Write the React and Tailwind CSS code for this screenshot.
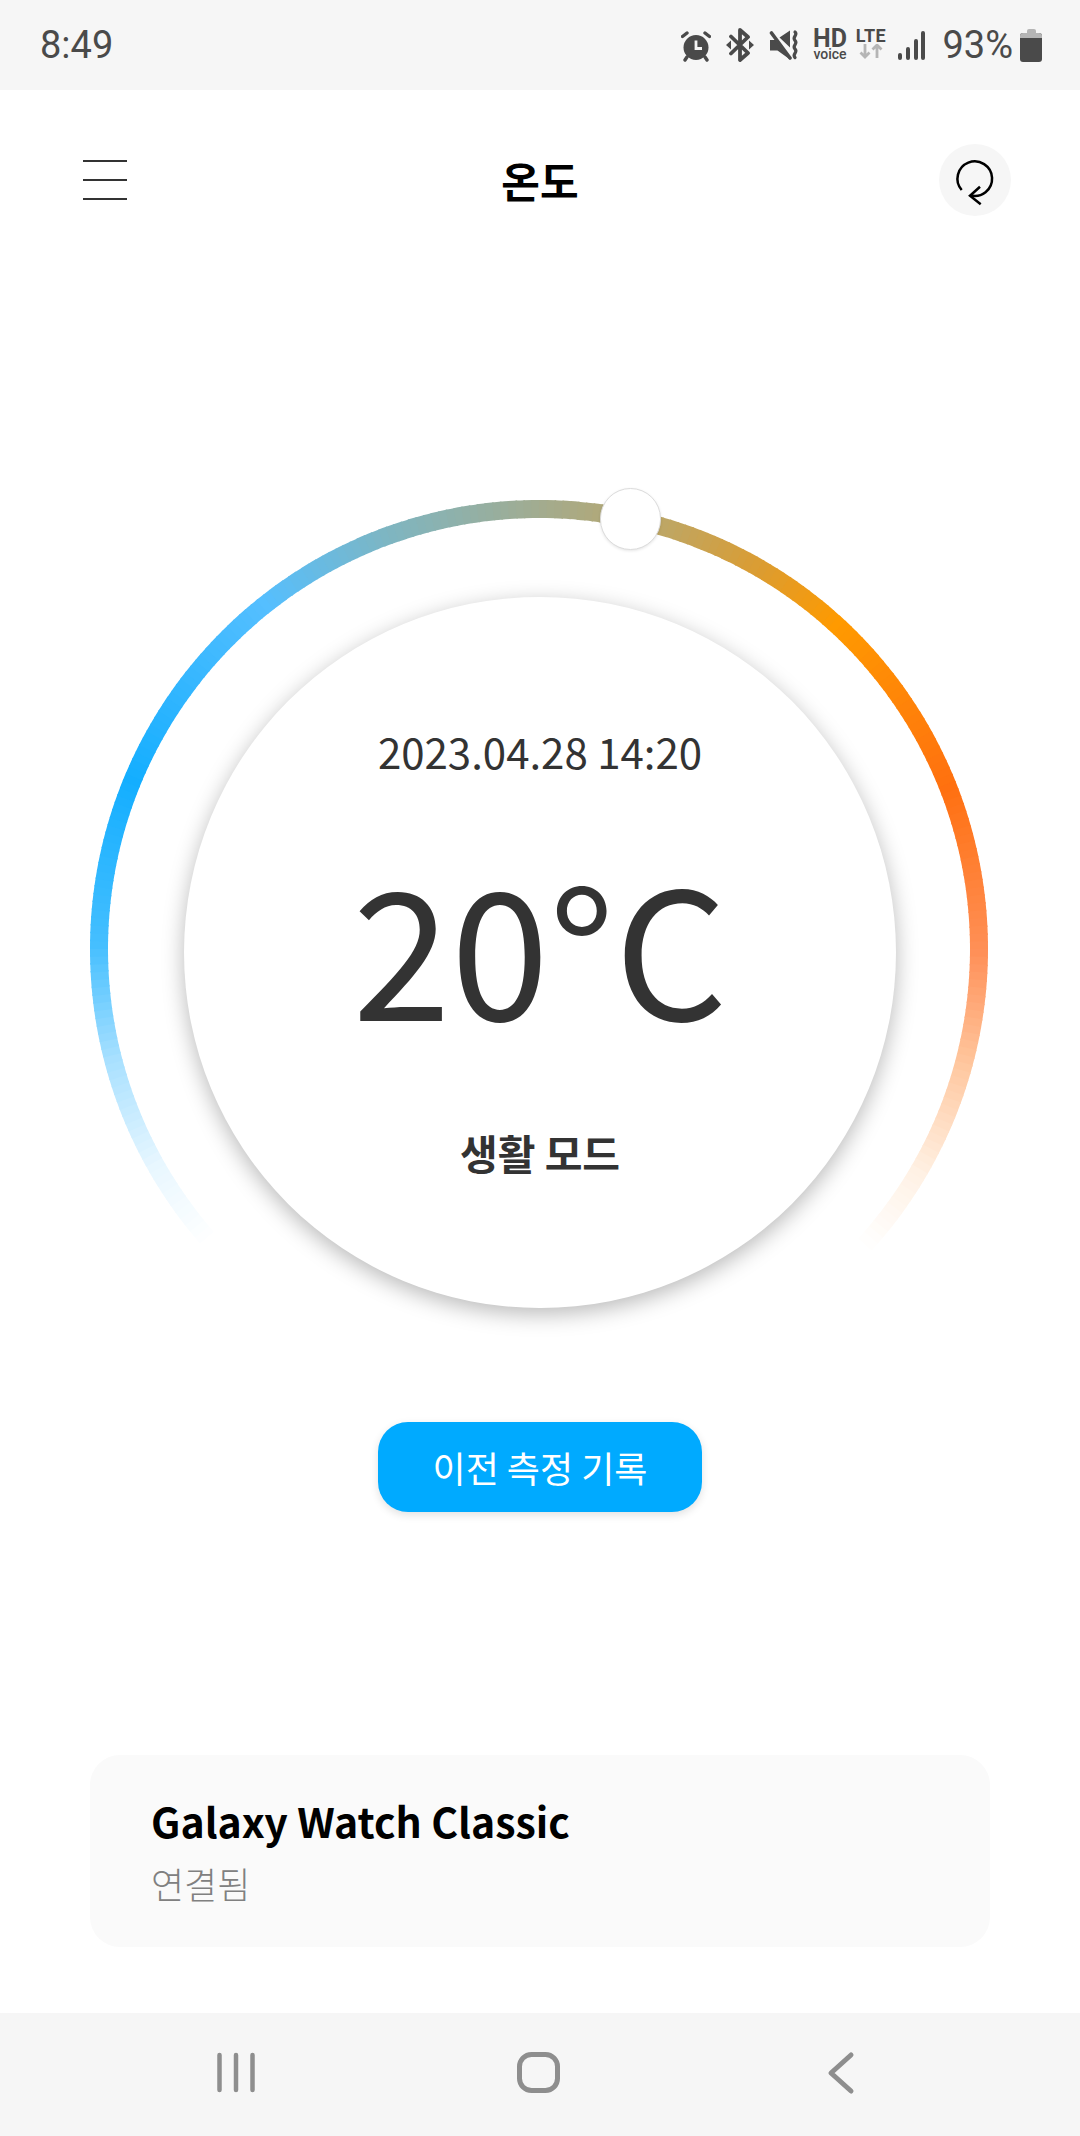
import React from "react";

const STOPS = [
  [-132, [255, 255, 255]],
  [-120, [232, 247, 255]],
  [-105, [168, 224, 255]],
  [-90, [69, 191, 255]],
  [-68, [20, 174, 255]],
  [-39, [85, 191, 255]],
  [-20, [127, 181, 192]],
  [0, [163, 171, 142]],
  [15, [188, 167, 104]],
  [30, [220, 156, 48]],
  [42, [255, 154, 0]],
  [68, [255, 112, 16]],
  [90, [255, 144, 88]],
  [105, [255, 200, 160]],
  [120, [255, 241, 228]],
  [132, [255, 255, 255]],
];

const colorAt = (a) => {
  for (let i = 0; i < STOPS.length - 1; i++) {
    const [a0, c0] = STOPS[i];
    const [a1, c1] = STOPS[i + 1];
    if (a >= a0 && a <= a1) {
      const t = (a - a0) / (a1 - a0);
      const c = c0.map((v, k) => Math.round(v + (c1[k] - v) * t));
      return `rgb(${c[0]},${c[1]},${c[2]})`;
    }
  }
  return "#fff";
};

const polar = (a, r = 440) => {
  const rad = (a * Math.PI) / 180;
  return [449 + r * Math.sin(rad), 449 - r * Math.cos(rad)];
};

const GaugeArc = () => {
  const segments = [];
  for (let a = -132; a < 132; a++) {
    const [x0, y0] = polar(a);
    const [x1, y1] = polar(a + 1.2);
    segments.push(
      <path
        key={a}
        d={`M${x0} ${y0} A440 440 0 0 1 ${x1} ${y1}`}
        stroke={colorAt(a)}
        strokeWidth="18"
        fill="none"
      />
    );
  }
  return (
    <svg width="898" height="898" viewBox="0 0 898 898" className="absolute left-0 top-0">
      {segments}
    </svg>
  );
};

const StatusIcons = () => (
  <div className="flex items-center text-[#4a4a4a]">
    {/* alarm */}
    <svg width="30" height="32" viewBox="0 0 30 32" className="mt-[1px]">
      <circle cx="15" cy="17.500" r="12.500" fill="#4a4a4a" />
      <path d="M15 10.500V18.500h6" stroke="#f6f6f6" strokeWidth="2.800" fill="none" />
      <path d="M1.500 6.500L6 3M28.500 6.500L24 3M6 27L4 30M24 27L26 30" stroke="#4a4a4a" strokeWidth="3.400" strokeLinecap="round" />
    </svg>
    {/* bluetooth */}
    <svg width="28" height="34" viewBox="0 0 28 34" className="ml-[15px]">
      <path d="M5 8.500l17 16.500-8 7V2l8 7L5 25.500" stroke="#4a4a4a" strokeWidth="3.800" fill="none" strokeLinejoin="round" strokeLinecap="round" />
      <path d="M0 17l5-4.500v9zM28 17l-5-4.500v9z" fill="#4a4a4a" />
    </svg>
    {/* muted speaker */}
    <svg width="30" height="32" viewBox="0 0 30 32" className="ml-[15px]">
      <path d="M1 11h5l15 16v3.500L8.500 21.500H1zM10.500 8.500L21 1.500v17z" fill="#4a4a4a" />
      <path d="M2.500 4L21 29" stroke="#4a4a4a" strokeWidth="3.600" strokeLinecap="round" />
      <path d="M26 3c3.500 3-3.500 5 0 8.500s-3.500 5 0 8.500-3.500 5 0 8.500" stroke="#4a4a4a" strokeWidth="3.200" fill="none" strokeLinecap="round" />
    </svg>
    {/* hd voice */}
    <div className="ml-[14px] flex w-[33px] flex-col items-center font-['Roboto',sans-serif]">
      <span className="h-[18px] text-[25px] font-bold leading-[18px]">HD</span>
      <span className="h-[12px] text-[14px] font-medium leading-[12px]">voice</span>
    </div>
    {/* lte */}
    <div className="ml-[9px] flex w-[31px] flex-col items-center font-['Roboto',sans-serif]">
      <span className="mt-[-4px] h-[15px] text-[18px] font-bold leading-[15px] tracking-[0.5px]">LTE</span>
      <svg width="24" height="15" viewBox="0 0 24 15" className="mt-[1px]">
        <path d="M6 0v13M1.500 8.500L6 13l4.500-4.500M18 14V1M13.500 5.500L18 1l4.500 4.500" stroke="#b5b5b5" strokeWidth="2.800" fill="none" />
      </svg>
    </div>
    {/* signal */}
    <svg width="28" height="30" viewBox="0 0 28 30" className="ml-[12px] mt-[1px]">
      <path d="M2 27v-3M10 27v-9M18 27V10M25 27V2" stroke="#4a4a4a" strokeWidth="4" strokeLinecap="round" fill="none" />
    </svg>
    <span className="ml-[16px] font-['Roboto',sans-serif] text-[38px] font-normal leading-none">93%</span>
    {/* battery */}
    <div className="ml-[7px] flex w-[22px] flex-col items-center">
      <div className="h-[4px] w-[9px] rounded-t-[2px] bg-[#b5b5b5]"></div>
      <div className="h-[29px] w-[22px] overflow-hidden rounded-[3px] bg-[#4a4a4a]">
        <div className="h-[5px] bg-[#b5b5b5]"></div>
      </div>
    </div>
  </div>
);

const App = () => {
  return (
    <div className="flex h-[2136px] w-[1080px] flex-col overflow-hidden bg-white font-['Noto_Sans_CJK_KR',sans-serif]">
      {/* status bar */}
      <div className="flex h-[90px] items-center justify-between bg-[#f6f6f6] pl-[40px] pr-[38px]">
        <span className="font-['Roboto',sans-serif] text-[38px] font-normal leading-none text-[#4a4a4a]">8:49</span>
        <StatusIcons />
      </div>

      {/* header */}
      <div className="flex items-center justify-between pl-[83px] pr-[69px] pt-[54px]">
        <div className="w-[58px]">
          <div className="flex h-[40px] w-[44px] flex-col justify-between">
            <div className="h-[2px] bg-[#333]"></div>
            <div className="h-[2px] bg-[#333]"></div>
            <div className="h-[2px] bg-[#333]"></div>
          </div>
        </div>
        <h1 className="text-[42px] font-bold leading-[72px] text-black">온도</h1>
        <div className="h-[72px] w-[72px] rounded-full bg-[#f6f6f6]">
          <svg width="72" height="72" viewBox="0 0 72 72">
            <path d="M22.700 46A17.300 17.300 0 1 1 31 51.300" stroke="#000" strokeWidth="2.500" fill="none" />
            <path d="M41 42.700L31 51.700L41.700 60.300" stroke="#000" strokeWidth="2.500" fill="none" />
          </svg>
        </div>
      </div>

      {/* gauge */}
      <div className="relative ml-[90px] mt-[284px] h-[898px] w-[898px]">
        <GaugeArc />
        <div className="absolute left-[510px] top-[-12px] h-[62px] w-[61px] rounded-full border border-[#dcdcdc] bg-white shadow-[0_1px_3px_rgba(0,0,0,0.1)]"></div>
        <div className="absolute left-[94px] top-[97px] flex h-[711px] w-[712px] flex-col items-center rounded-full bg-white text-[#333] shadow-[0_6px_22px_rgba(0,0,0,0.28)]">
          <span className="mt-[124px] text-[42px] leading-[60px]">2023.04.28 14:20</span>
          <span className="mt-[43px] text-[177px] leading-[240px]">20°C</span>
          <span className="mt-[58px] text-[41px] font-bold leading-[60px]">생활 모드</span>
        </div>
      </div>

      {/* history button */}
      <button className="mx-auto mt-[24px] h-[90px] w-[324px] rounded-[30px] bg-[#00aaff] text-[36px] text-white shadow-[0_3px_8px_rgba(0,0,0,0.12)]">
        이전 측정 기록
      </button>

      {/* device card */}
      <div className="ml-[90px] mt-[243px] flex h-[192px] w-[900px] flex-col rounded-[30px] bg-[#fafafa] pl-[61px] pt-[35px]">
        <span className="text-[41px] font-bold leading-[60px] text-black">Galaxy Watch Classic</span>
        <span className="mt-[8px] text-[36px] font-light leading-[50px] text-[#808080]">연결됨</span>
      </div>

      {/* nav bar */}
      <div className="mt-[66px] flex h-[123px] items-start bg-[#f6f6f6]">
        <svg width="1080" height="123" viewBox="0 0 1080 123" className="block">
          <path d="M219.500 42v35M236 42v35M252.500 42v35" stroke="#8e8e8e" strokeWidth="4.500" strokeLinecap="round" fill="none" />
          <rect x="519.500" y="41.500" width="38" height="36" rx="12" stroke="#8e8e8e" strokeWidth="5" fill="none" />
          <path d="M851 42L831 60L851 78" stroke="#8e8e8e" strokeWidth="5" strokeLinecap="round" strokeLinejoin="round" fill="none" />
        </svg>
      </div>
    </div>
  );
};

export default App;
